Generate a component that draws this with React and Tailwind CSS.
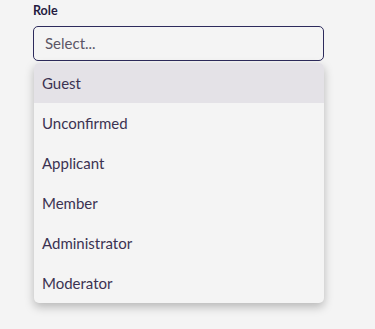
const roles = ["Guest", "Unconfirmed", "Applicant", "Member", "Administrator", "Moderator"];

export default function App() {
    return (
        <div className="min-h-[329px] bg-[#f4f4f4] font-['Lato',sans-serif]">
            <div className="w-[324px] pl-[33px] pt-[3px]">
                <label className="block text-[12.5px] font-bold leading-[16px] text-[#251b3f]">
                    Role
                </label>
                <div className="mt-[7px] flex h-[35px] items-center rounded-[5px] border border-[#2d2b5c] bg-[#f4f4f4] px-[11px] text-[15px] text-[#5b5666]">
                    Select...
                </div>
                <ul className="ml-[1px] mt-[2px] w-[290px] overflow-hidden rounded-[5px] bg-[#f4f4f4] shadow-[0_4px_10px_rgba(0,0,0,0.25)]">
                    {roles.map((role, i) => (
                        <li
                            key={role}
                            className={
                                "flex h-[40px] items-center px-[8px] text-[15px] text-[#3b3252] " +
                                (i === 0 ? "bg-[#e4e2e7]" : "")
                            }
                        >
                            {role}
                        </li>
                    ))}
                </ul>
            </div>
        </div>
    );
}
